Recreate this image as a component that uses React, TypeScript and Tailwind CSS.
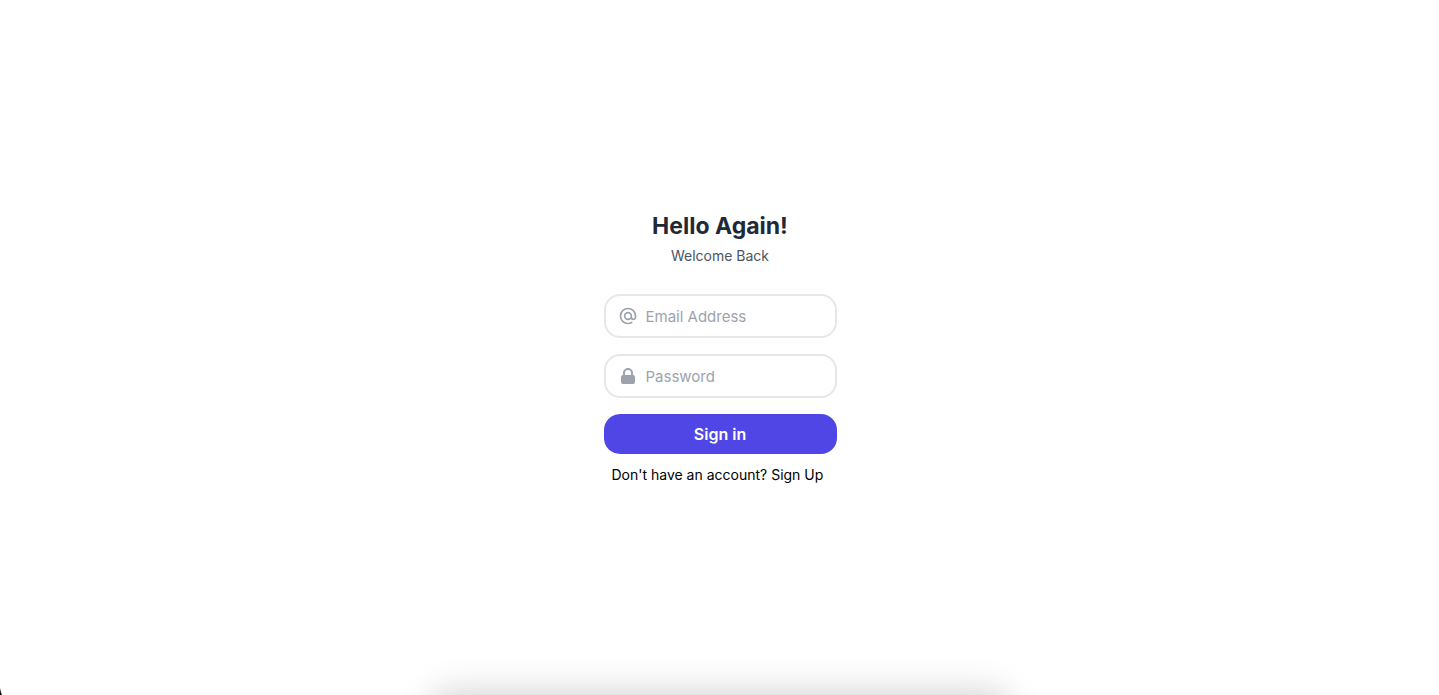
import React from "react";

type FieldProps = {
  id: string;
  type: string;
  label: string;
  children: React.ReactNode;
};

function Field({ id, type, label, children }: FieldProps) {
  return (
    <div className="mb-4 flex items-center rounded-2xl border-2 border-[#e5e7eb] px-3 py-2">
      <label htmlFor={id} className="shrink-0">
        {children}
      </label>
      <input
        id={id}
        name={id}
        type={type}
        placeholder={label}
        aria-label={label}
        className="h-6 w-full min-w-0 border-none pl-2 text-[15px] text-gray-800 outline-none placeholder:text-[#9ca3af]"
      />
    </div>
  );
}

export default function App() {
  return (
    <main className="relative flex min-h-screen items-center justify-center overflow-hidden bg-white pl-px font-['Inter','Liberation_Sans',sans-serif]">
      <form className="w-[233px]" onSubmit={(e) => e.preventDefault()}>
        <h1 className="mb-1 text-center text-[23px] leading-8 font-bold whitespace-nowrap text-[#1f2937]">Hello Again!</h1>
        <p className="mb-7 text-center text-sm text-[#4b5563]">Welcome Back</p>
        <Field id="email" type="email" label="Email Address">
          <svg className="h-5 w-5 text-[#9ca3af]" fill="none" viewBox="0 0 24 24" stroke="currentColor" aria-hidden="true">
            <path
              strokeLinecap="round"
              strokeLinejoin="round"
              strokeWidth="2"
              d="M16 12a4 4 0 10-8 0 4 4 0 008 0zm0 0v1.5a2.5 2.5 0 005 0V12a9 9 0 10-9 9m4.5-1.206a8.959 8.959 0 01-4.5 1.207"
            />
          </svg>
        </Field>
        <Field id="password" type="password" label="Password">
          <svg className="h-5 w-5 text-[#9ca3af]" viewBox="0 0 20 20" fill="currentColor" aria-hidden="true">
            <path
              fillRule="evenodd"
              clipRule="evenodd"
              d="M5 9V7a5 5 0 0110 0v2a2 2 0 012 2v5a2 2 0 01-2 2H5a2 2 0 01-2-2v-5a2 2 0 012-2zm8-2v2H7V7a3 3 0 016 0z"
            />
          </svg>
        </Field>
        <button type="submit" className="block w-full rounded-2xl bg-[#4f46e5] py-2 text-base font-semibold text-white">
          Sign in
        </button>
        <a href="#signup" className="mt-[11px] ml-2 block text-sm whitespace-nowrap text-black">
          Don't have an account? Sign Up
        </a>
      </form>
      <div className="pointer-events-none absolute -bottom-10 left-1/2 h-10 w-[574px] -translate-x-1/2 rounded-2xl shadow-[0_0_34px_4px_rgba(0,0,0,0.17)]" />
      <svg className="pointer-events-none absolute bottom-0 left-0 h-[7px] w-[2px]" viewBox="0 0 2 7" aria-hidden="true">
        <path d="M0 0Q0.5 4 2 7H0Z" fill="#000" />
      </svg>
    </main>
  );
}
